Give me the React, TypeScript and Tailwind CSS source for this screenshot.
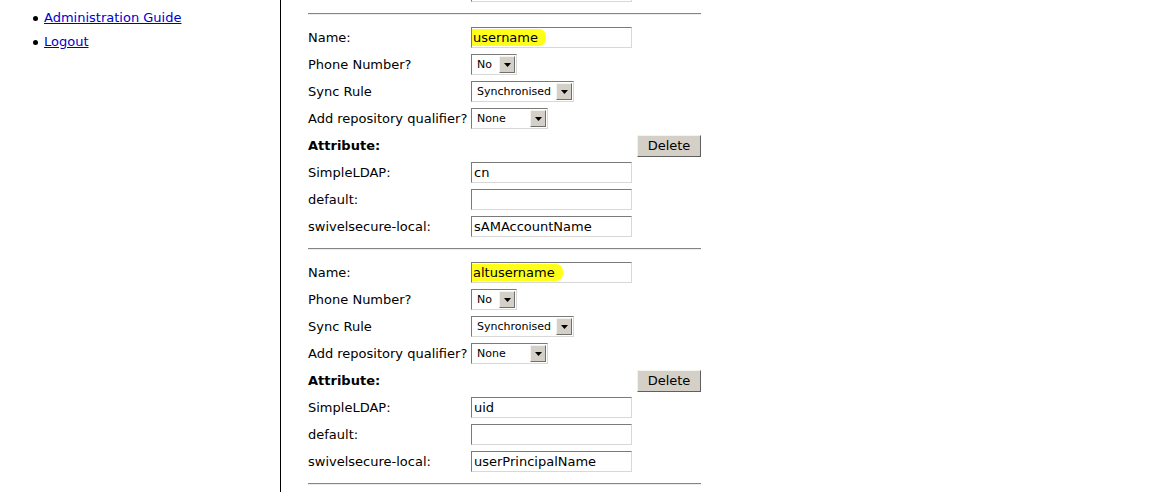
import React from "react";

const font = "font-['Verdana','DejaVu_Sans',sans-serif]";

function TextBox({ value, mark = false }: { value: string; mark?: boolean }) {
  return (
    <div className="flex h-[21px] w-[161px] items-stretch border border-t-[#7a7a7a] border-l-[#7a7a7a] border-r-[#d8d8d8] border-b-[#d8d8d8] bg-white">
      {mark ? (
        <span className="my-[1px] flex items-center rounded-r-[7px] bg-[#ffff1a] pl-[1px] pr-[8px] text-[13px] leading-none">
          {value}
        </span>
      ) : (
        <span className="flex items-center pl-[2px] text-[13px] leading-none">{value}</span>
      )}
    </div>
  );
}

function Select({ value, width }: { value: string; width: string }) {
  return (
    <div
      className={`flex h-[21px] ${width} items-stretch border border-t-[#7a7a7a] border-l-[#7a7a7a] border-r-[#d8d8d8] border-b-[#d8d8d8] bg-white`}
    >
      <span className="flex flex-1 items-center pl-[5px] text-[11px] leading-none">{value}</span>
      <span className="m-[1px] flex w-[16px] items-center justify-center border border-t-[#f4f3ee] border-l-[#f4f3ee] border-r-[#6f6f6f] border-b-[#6f6f6f] bg-[#d4d0c8]">
        <svg width="7" height="4" viewBox="0 0 7 4">
          <path d="M0 0h7L3.5 4z" fill="#000" />
        </svg>
      </span>
    </div>
  );
}

function Row({ label, bold = false, children }: { label: string; bold?: boolean; children?: React.ReactNode }) {
  return (
    <div className="flex h-[27px] items-center">
      <span className={`w-[163px] shrink-0 text-[13px] leading-none ${bold ? "font-bold" : ""}`}>{label}</span>
      {children}
    </div>
  );
}

interface Mapping {
  name: string;
  ldap: string;
  local: string;
}

const MAPPINGS: Mapping[] = [
  { name: "username", ldap: "cn", local: "sAMAccountName" },
  { name: "altusername", ldap: "uid", local: "userPrincipalName" },
];

function Rule() {
  return <div className="h-[2px] w-[393px] border-t border-[#858585] border-b border-b-[#ededed]" />;
}

function MappingBlock({ m }: { m: Mapping }) {
  return (
    <div className="flex flex-col pt-[9px] pb-[8px]">
      <Row label="Name:">
        <TextBox value={m.name} mark />
      </Row>
      <Row label="Phone Number?">
        <Select value="No" width="w-[46px]" />
      </Row>
      <Row label="Sync Rule">
        <Select value="Synchronised" width="w-[103px]" />
      </Row>
      <Row label="Add repository qualifier?">
        <Select value="None" width="w-[77px]" />
      </Row>
      <div className="flex h-[27px] w-[393px] items-center justify-between">
        <span className="text-[13px] font-bold leading-none">Attribute:</span>
        <button
          type="button"
          className="flex h-[22px] w-[64px] items-center justify-center border border-t-[#f4f3ee] border-l-[#f4f3ee] border-r-[#5f5f5f] border-b-[#5f5f5f] bg-[#d4d0c8] text-[13px] leading-none text-black"
        >
          Delete
        </button>
      </div>
      <Row label="SimpleLDAP:">
        <TextBox value={m.ldap} />
      </Row>
      <Row label="default:">
        <TextBox value="" />
      </Row>
      <Row label="swivelsecure-local:">
        <TextBox value={m.local} />
      </Row>
    </div>
  );
}

export default function App() {
  return (
    <div className={`flex h-[492px] w-[1171px] overflow-hidden bg-white text-black ${font}`}>
      <nav className="h-full w-[281px] shrink-0 border-r border-black">
        <ul className="-mt-[13px] flex flex-col gap-[11px] pl-[44px] text-[13px] leading-[13px]">
          {["Installation Guide", "Administration Guide", "Logout"].map((item) => (
            <li key={item} className="relative">
              <span className="absolute -left-[11px] top-[5px] h-[5px] w-[5px] rounded-full bg-black" />
              <a href="#" className="text-[#0000cc] underline">
                {item}
              </a>
            </li>
          ))}
        </ul>
      </nav>
      <main className="flex flex-col pl-[27px]">
        <div className="-mt-[22px] pb-[8px]">
          <Row label="swivelsecure-local:">
            <TextBox value="" />
          </Row>
        </div>
        {MAPPINGS.map((m) => (
          <React.Fragment key={m.name}>
            <Rule />
            <MappingBlock m={m} />
          </React.Fragment>
        ))}
        <Rule />
      </main>
    </div>
  );
}
